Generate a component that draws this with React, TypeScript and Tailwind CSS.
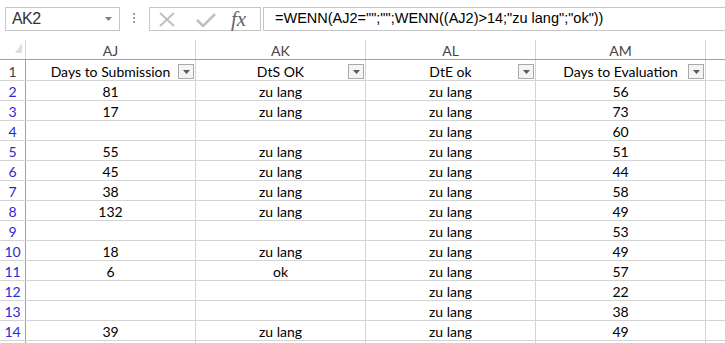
import React from "react";

type DataRow = [number, string, string, string, string];

const rows: DataRow[] = [
  [2, "81", "zu lang", "zu lang", "56"],
  [3, "17", "zu lang", "zu lang", "73"],
  [4, "", "", "zu lang", "60"],
  [5, "55", "zu lang", "zu lang", "51"],
  [6, "45", "zu lang", "zu lang", "44"],
  [7, "38", "zu lang", "zu lang", "58"],
  [8, "132", "zu lang", "zu lang", "49"],
  [9, "", "", "zu lang", "53"],
  [10, "18", "zu lang", "zu lang", "49"],
  [11, "6", "ok", "zu lang", "57"],
  [12, "", "", "zu lang", "22"],
  [13, "", "", "zu lang", "38"],
  [14, "39", "zu lang", "zu lang", "49"],
];

const cellFont = { fontFamily: "Lato, 'Open Sans', sans-serif" };

function FilterButton() {
  return (
    <div className="absolute right-[1px] top-[4px] w-[16px] h-[15px] border border-[#a9a9a9] bg-[#f4f4f4] flex items-center justify-center">
      <svg width="7" height="4" viewBox="0 0 7 4">
        <path d="M0 0 L7 0 L3.5 4 Z" fill="#5a5a5a" />
      </svg>
    </div>
  );
}

function HeaderCell({ label, filter }: { label: string; filter?: boolean }) {
  return (
    <div className="relative w-[170px] shrink-0 h-full border-r border-[#d4d4d4] flex justify-center text-black leading-[19px] pt-[2px]">
      {label}
      {filter && <FilterButton />}
    </div>
  );
}

function Cell({ value }: { value: string }) {
  return (
    <div className="w-[170px] shrink-0 h-full border-r border-[#d4d4d4] flex justify-center text-black leading-[19px] pt-[1px]">
      {value}
    </div>
  );
}

export default function App() {
  return (
    <div className="w-[725px] h-[343px] overflow-hidden bg-white">
      {/* formula bar */}
      <div className="h-[40px] flex items-start pt-[7px]">
        <div
          className="ml-[5px] w-[115px] h-[24px] border border-[#c6c6c6] flex items-center justify-between pl-[6px] pr-[7px] text-[#333]"
          style={{ fontFamily: "'Liberation Sans', Arial, sans-serif" }}
        >
          <span className="text-[16px] tracking-[-0.6px]">AK2</span>
          <svg width="7" height="4" viewBox="0 0 7 4">
            <path d="M0 0 L7 0 L3.5 4 Z" fill="#808080" />
          </svg>
        </div>
        <div className="ml-[13px] mt-[6px] flex flex-col gap-[2px]">
          <div className="w-[2px] h-[2px] bg-[#a0a0a0]" />
          <div className="w-[2px] h-[2px] bg-[#a0a0a0]" />
          <div className="w-[2px] h-[2px] bg-[#a0a0a0]" />
        </div>
        <div className="ml-[14px] w-[112px] h-[24px] border border-[#c6c6c6] relative">
          <svg className="absolute left-[8px] top-[4px]" width="18" height="15" viewBox="0 0 18 15">
            <path d="M2 1 L16 14 M16 1 L2 14" stroke="#c0c0c0" strokeWidth="2" fill="none" />
          </svg>
          <svg className="absolute left-[46px] top-[5px]" width="20" height="14" viewBox="0 0 20 14">
            <path d="M1 7 L7 13 L19 1" stroke="#c0c0c0" strokeWidth="2.6" fill="none" />
          </svg>
          <span
            className="absolute left-[81px] top-[0px] text-[21px] leading-[22px] italic text-[#666]"
            style={{ fontFamily: "'Liberation Serif', 'Times New Roman', serif" }}
          >
            fx
          </span>
        </div>
        <div
          className="ml-[2px] flex-1 h-[24px] border border-r-0 border-[#c6c6c6] flex items-center pl-[11px] text-[14.5px] text-black"
          style={{ fontFamily: "'Liberation Sans', Arial, sans-serif" }}
        >
          =WENN(AJ2="";"";WENN((AJ2)&gt;14;"zu lang";"ok"))
        </div>
      </div>

      {/* sheet */}
      <div className="text-[14px]" style={cellFont}>
        {/* column letters */}
        <div className="h-[20px] flex border-b border-[#a0a0a0] text-[#444]">
          <div className="w-[26px] shrink-0 h-full border-r border-[#d4d4d4] relative">
            <svg className="absolute left-[15px] top-[3px]" width="7" height="10" viewBox="0 0 7 10">
              <path d="M7 0 L7 10 L0 10 Z" fill="#dcdcdc" />
            </svg>
          </div>
          {["AJ", "AK", "AL", "AM"].map((c) => (
            <div key={c} className="w-[170px] shrink-0 h-full border-r border-[#d4d4d4] flex justify-center leading-[19px] pt-[1px]">
              {c}
            </div>
          ))}
          <div className="flex-1" />
        </div>

        {/* header row */}
        <div className="h-[21px] flex border-b border-[#d4d4d4]">
          <div className="w-[26px] shrink-0 h-full border-r border-[#a0a0a0] flex justify-center text-[#444] leading-[19px] pt-[2px]">
            1
          </div>
          <HeaderCell label="Days to Submission" filter />
          <HeaderCell label="DtS OK" filter />
          <HeaderCell label="DtE ok" filter />
          <HeaderCell label="Days to Evaluation" filter />
          <div className="flex-1" />
        </div>

        {rows.map(([n, a, b, c, d]) => (
          <div key={n} className="h-[20px] flex border-b border-[#d4d4d4]">
            <div className="w-[26px] shrink-0 h-full border-r border-[#a0a0a0] flex justify-center text-[#2a2ad6] leading-[19px] pt-[1px]">
              {n}
            </div>
            <Cell value={a} />
            <Cell value={b} />
            <Cell value={c} />
            <Cell value={d} />
            <div className="flex-1" />
          </div>
        ))}

        <div className="h-[20px] flex border-b border-[#d4d4d4]">
          <div className="w-[26px] shrink-0 h-full border-r border-[#a0a0a0]" />
          <Cell value="" />
          <Cell value="" />
          <Cell value="" />
          <Cell value="" />
          <div className="flex-1" />
        </div>
      </div>
    </div>
  );
}
